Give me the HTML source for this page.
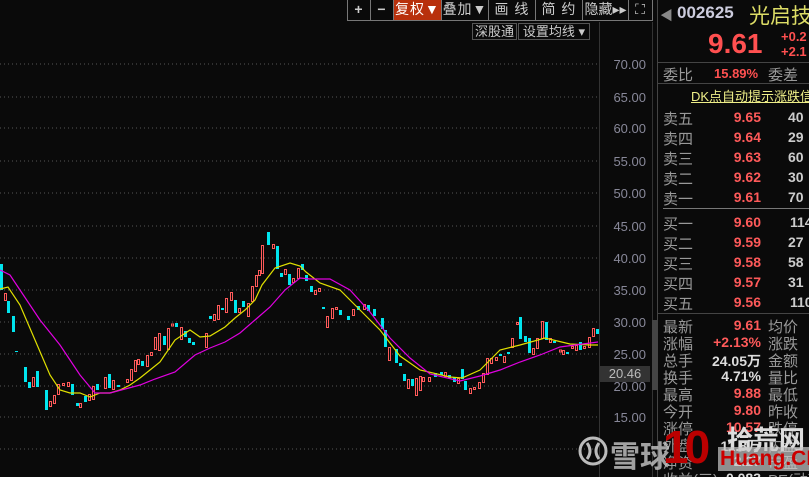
<!DOCTYPE html>
<html style="height:477px;overflow:hidden"><head><meta charset="utf-8"><style>
*{margin:0;padding:0;box-sizing:border-box}
body{width:809px;height:477px;background:#0a0a0a;overflow:hidden;position:relative;font-family:"Liberation Sans","Noto Sans CJK SC",sans-serif;color:#aaa}
.a{position:absolute;white-space:nowrap}
.tb{position:absolute;top:0;height:21px;border:1px solid #777;border-top:none;color:#ccc;font-size:14px;line-height:19px;text-align:center;letter-spacing:1px}
.ax{position:absolute;left:600px;width:46px;text-align:right;font-size:13px;color:#889}
.lb{position:absolute;left:663px;font-size:15px;color:#999}
.pr{position:absolute;right:48px;font-size:14px;color:#ff5a5a;font-weight:bold;text-align:right}
.r2{position:absolute;left:768px;font-size:15px;color:#999}
.q{position:absolute;left:788px;font-size:14px;color:#ccc;font-weight:bold}
.hl{position:absolute;left:657px;width:152px;height:1px;background:#444}
.r{fill:#0a0a0a;stroke:#ff5a5a;stroke-width:1}
.c{fill:#00e5ee}
#wrap{position:absolute;left:0;top:0;width:809px;height:477px;overflow:hidden}
</style></head><body><div id="wrap">
<svg class="a" style="left:0;top:0" width="809" height="477">
<g stroke="#555" stroke-dasharray="1,3">
<line x1="0" y1="64" x2="598" y2="64"/><line x1="0" y1="97" x2="598" y2="97"/><line x1="0" y1="128" x2="598" y2="128"/><line x1="0" y1="161" x2="598" y2="161"/><line x1="0" y1="193" x2="598" y2="193"/><line x1="0" y1="226" x2="598" y2="226"/><line x1="0" y1="258" x2="598" y2="258"/><line x1="0" y1="290" x2="598" y2="290"/><line x1="0" y1="322" x2="598" y2="322"/><line x1="0" y1="354" x2="598" y2="354"/><line x1="0" y1="386" x2="598" y2="386"/><line x1="0" y1="417" x2="598" y2="417"/><line x1="0" y1="449" x2="598" y2="449"/>
</g>
<line x1="599.5" y1="22" x2="599.5" y2="477" stroke="#333"/>
<line x1="652.5" y1="22" x2="652.5" y2="477" stroke="#333"/>
<line x1="657.5" y1="0" x2="657.5" y2="477" stroke="#444"/>
<rect x="652" y="320" width="5" height="70" fill="#444"/>
<g>
<rect class="c" x="0" y="264" width="3" height="26"/>
<rect class="r" x="4.5" y="293.5" width="2" height="7"/>
<rect class="c" x="7" y="301" width="3" height="12"/>
<rect class="c" x="12" y="316" width="3" height="16"/>
<rect class="c" x="15" y="351" width="3" height="1"/>
<rect class="c" x="24" y="367" width="3" height="15"/>
<rect class="c" x="28" y="382" width="3" height="6"/>
<rect class="r" x="32.5" y="377.5" width="2" height="9"/>
<rect class="c" x="36" y="371" width="3" height="16"/>
<rect class="c" x="45" y="390" width="3" height="20"/>
<rect class="r" x="49.5" y="401.5" width="2" height="5"/>
<rect class="r" x="53.5" y="395.5" width="2" height="8"/>
<rect class="r" x="57.5" y="384.5" width="2" height="10"/>
<rect class="r" x="62.5" y="383.5" width="2" height="2"/>
<rect class="r" x="67.5" y="382.5" width="2" height="4"/>
<rect class="c" x="71" y="384" width="3" height="11"/>
<rect class="c" x="76" y="403" width="3" height="3"/>
<rect class="r" x="79.5" y="403.5" width="2" height="4"/>
<rect class="c" x="84" y="396" width="3" height="6"/>
<rect class="r" x="88.5" y="394.5" width="2" height="6"/>
<rect class="r" x="92.5" y="386.5" width="2" height="13"/>
<rect class="c" x="96" y="384" width="3" height="6"/>
<rect class="r" x="104.5" y="377.5" width="2" height="11"/>
<rect class="c" x="108" y="374" width="3" height="14"/>
<rect class="r" x="112.5" y="380.5" width="2" height="9"/>
<rect class="c" x="117" y="385" width="3" height="2"/>
<rect class="r" x="126.5" y="379.5" width="2" height="3"/>
<rect class="r" x="130.5" y="369.5" width="2" height="11"/>
<rect class="r" x="134.5" y="360.5" width="2" height="11"/>
<rect class="r" x="137.5" y="359.5" width="2" height="5"/>
<rect class="c" x="141" y="361" width="3" height="5"/>
<rect class="r" x="146.5" y="355.5" width="2" height="11"/>
<rect class="r" x="150.5" y="352.5" width="2" height="3"/>
<rect class="r" x="154.5" y="337.5" width="2" height="12"/>
<rect class="r" x="158.5" y="333.5" width="2" height="17"/>
<rect class="c" x="163" y="336" width="3" height="9"/>
<rect class="r" x="167.5" y="328.5" width="2" height="21"/>
<rect class="r" x="171.5" y="324" width="2" height="2"/>
<rect class="c" x="175" y="323" width="3" height="4"/>
<rect class="r" x="180.5" y="327.5" width="2" height="12"/>
<rect class="c" x="184" y="331" width="3" height="6"/>
<rect class="c" x="188" y="338" width="3" height="5"/>
<rect class="c" x="192" y="342" width="3" height="3"/>
<rect class="r" x="205.5" y="333.5" width="2" height="14"/>
<rect class="c" x="209" y="316" width="3" height="3"/>
<rect class="r" x="213.5" y="314.5" width="2" height="6"/>
<rect class="r" x="217.5" y="305.5" width="2" height="14"/>
<rect class="c" x="221" y="308" width="3" height="2"/>
<rect class="r" x="225.5" y="298.5" width="2" height="14"/>
<rect class="r" x="230.5" y="292.5" width="2" height="8"/>
<rect class="c" x="234" y="300" width="3" height="13"/>
<rect class="r" x="238.5" y="308.5" width="2" height="4"/>
<rect class="c" x="242" y="301" width="3" height="6"/>
<rect class="r" x="247.5" y="303.5" width="2" height="13"/>
<rect class="r" x="251.5" y="286.5" width="2" height="15"/>
<rect class="r" x="255.5" y="275.5" width="2" height="11"/>
<rect class="r" x="258.5" y="270.5" width="2" height="5"/>
<rect class="r" x="261.5" y="245.5" width="2" height="28"/>
<rect class="c" x="267" y="232" width="3" height="13"/>
<rect class="r" x="272.5" y="244.5" width="2" height="4"/>
<rect class="c" x="276" y="246" width="3" height="23"/>
<rect class="c" x="280" y="273" width="3" height="4"/>
<rect class="r" x="284.5" y="269.5" width="2" height="5"/>
<rect class="c" x="288" y="274" width="3" height="11"/>
<rect class="r" x="292.5" y="278.5" width="2" height="4"/>
<rect class="r" x="297.5" y="268.5" width="2" height="10"/>
<rect class="c" x="301" y="264" width="3" height="6"/>
<rect class="c" x="305" y="275" width="3" height="6"/>
<rect class="c" x="310" y="286" width="3" height="6"/>
<rect class="r" x="314.5" y="290.5" width="2" height="4"/>
<rect class="r" x="318.5" y="288.5" width="2" height="3"/>
<rect class="c" x="322" y="307" width="3" height="2"/>
<rect class="r" x="326.5" y="316.5" width="2" height="11"/>
<rect class="r" x="331.5" y="308.5" width="2" height="10"/>
<rect class="r" x="335.5" y="307.5" width="2" height="2"/>
<rect class="c" x="339" y="310" width="3" height="5"/>
<rect class="c" x="347" y="316" width="3" height="4"/>
<rect class="r" x="352.5" y="309.5" width="2" height="6"/>
<rect class="c" x="357" y="306" width="3" height="4"/>
<rect class="r" x="363.5" y="304.5" width="2" height="5"/>
<rect class="c" x="367" y="305" width="3" height="6"/>
<rect class="c" x="373" y="309" width="3" height="7"/>
<rect class="c" x="381" y="318" width="3" height="11"/>
<rect class="c" x="384" y="330" width="3" height="17"/>
<rect class="r" x="388.5" y="347.5" width="2" height="13"/>
<rect class="c" x="395" y="349" width="3" height="14"/>
<rect class="c" x="399" y="363" width="3" height="3"/>
<rect class="c" x="403" y="374" width="3" height="7"/>
<rect class="r" x="407.5" y="379.5" width="2" height="9"/>
<rect class="c" x="411" y="379" width="3" height="7"/>
<rect class="r" x="415.5" y="378.5" width="2" height="17"/>
<rect class="r" x="419.5" y="376.5" width="2" height="14"/>
<rect class="r" x="422.5" y="377.5" width="2" height="4"/>
<rect class="r" x="428.5" y="377.5" width="2" height="4"/>
<rect class="c" x="434" y="373" width="3" height="4"/>
<rect class="c" x="440" y="372" width="3" height="3"/>
<rect class="r" x="444.5" y="372.5" width="2" height="4"/>
<rect class="c" x="448" y="375" width="3" height="3"/>
<rect class="c" x="453" y="377" width="3" height="5"/>
<rect class="r" x="457.5" y="378.5" width="2" height="5"/>
<rect class="c" x="461" y="369" width="3" height="10"/>
<rect class="c" x="464" y="381" width="3" height="9"/>
<rect class="r" x="469.5" y="388.5" width="2" height="5"/>
<rect class="r" x="473.5" y="387.5" width="2" height="2"/>
<rect class="r" x="478.5" y="382.5" width="2" height="6"/>
<rect class="r" x="482.5" y="373.5" width="2" height="9"/>
<rect class="r" x="486.5" y="358.5" width="2" height="16"/>
<rect class="r" x="490.5" y="358.5" width="2" height="5"/>
<rect class="r" x="495.5" y="357.5" width="2" height="3"/>
<rect class="c" x="499" y="354" width="3" height="2"/>
<rect class="r" x="503.5" y="356.5" width="2" height="6"/>
<rect class="c" x="507" y="352" width="3" height="2"/>
<rect class="r" x="511.5" y="338.5" width="2" height="9"/>
<rect class="r" x="516.5" y="322.5" width="2" height="2"/>
<rect class="c" x="519" y="317" width="3" height="22"/>
<rect class="c" x="524" y="336" width="3" height="6"/>
<rect class="c" x="528" y="338" width="3" height="15"/>
<rect class="r" x="532.5" y="348.5" width="2" height="6"/>
<rect class="r" x="536.5" y="338.5" width="2" height="10"/>
<rect class="r" x="541.5" y="321.5" width="2" height="17"/>
<rect class="c" x="545" y="322" width="3" height="18"/>
<rect class="r" x="549.5" y="338.5" width="2" height="4"/>
<rect class="c" x="553" y="341" width="3" height="2"/>
<rect class="r" x="559.5" y="350" width="2" height="2"/>
<rect class="r" x="562.5" y="350.5" width="2" height="4"/>
<rect class="c" x="566" y="352" width="3" height="2"/>
<rect class="r" x="571.5" y="346.5" width="2" height="2"/>
<rect class="r" x="575.5" y="345.5" width="2" height="5"/>
<rect class="c" x="579" y="342" width="3" height="8"/>
<rect class="r" x="583.5" y="346.5" width="2" height="2"/>
<rect class="r" x="588.5" y="337.5" width="2" height="10"/>
<rect class="r" x="592.5" y="328.5" width="2" height="8"/>
<rect class="c" x="596" y="329" width="3" height="5"/>
</g>
<polyline fill="none" stroke="#e0e000" stroke-width="1.2" points="0,289 8,287 20,305 35,340 50,375 60,390 70,393 80,393 90,397 100,393 110,393 120,390 130,385 140,378 150,370 160,362 175,340 190,330 200,337 210,336 225,327 235,318 245,310 255,300 262,285 275,268 290,263 300,266 306,272 320,283 340,290 360,310 380,330 400,356 420,370 450,377 462,378 480,370 500,350 520,345 545,338 570,344 590,345 598,345"/>
<polyline fill="none" stroke="#e000e0" stroke-width="1.2" points="0,270 10,275 20,290 40,320 60,345 80,375 95,393 110,393 125,389 140,385 155,379 175,372 195,355 210,348 225,342 240,333 255,320 270,307 285,290 300,278 310,279 330,279 350,290 370,312 390,338 410,358 430,374 460,381 480,376 500,370 520,362 540,355 560,347 575,345 598,342"/>
</svg>

<div class="tb" style="left:347px;width:24px;font-weight:bold">+</div>
<div class="tb" style="left:370px;width:24px;font-weight:bold">−</div>
<div class="tb" style="left:393px;width:49px;background:#b8300c;color:#fff">复权▼</div>
<div class="tb" style="left:441px;width:48px">叠加▼</div>
<div class="tb" style="left:488px;width:48px">画 线</div>
<div class="tb" style="left:535px;width:48px">简 约</div>
<div class="tb" style="left:582px;width:47px;letter-spacing:0">隐藏▸▸</div>
<div class="tb" style="left:628px;width:25px">⛶</div>
<div class="a" style="left:472px;top:23px;width:45px;height:17px;border:1px solid #555;font-size:13px;line-height:15px;text-align:center;color:#ccc">深股通</div>
<div class="a" style="left:518px;top:23px;width:72px;height:17px;border:1px solid #555;font-size:13px;line-height:15px;text-align:center;color:#ccc">设置均线 ▾</div>

<div class="ax" style="top:57px">70.00</div>
<div class="ax" style="top:90px">65.00</div>
<div class="ax" style="top:121px">60.00</div>
<div class="ax" style="top:154px">55.00</div>
<div class="ax" style="top:186px">50.00</div>
<div class="ax" style="top:219px">45.00</div>
<div class="ax" style="top:251px">40.00</div>
<div class="ax" style="top:283px">35.00</div>
<div class="ax" style="top:315px">30.00</div>
<div class="ax" style="top:347px">25.00</div>
<div class="ax" style="top:379px">20.00</div>
<div class="ax" style="top:410px">15.00</div>
<div class="a" style="left:600px;top:366px;width:50px;height:16px;background:#333;color:#bbb;font-size:13px;text-align:center;line-height:16px">20.46</div>

<div class="a" style="left:660px;top:5px;font-size:13px;color:#888">◀</div>
<div class="a" style="left:677px;top:3px;font-size:17px;color:#ccd;font-weight:bold">002625</div>
<div class="a" style="left:749px;top:0px;font-size:21px;color:#dd6">光启技</div>
<div class="a" style="left:708px;top:28px;font-size:28px;color:#ff5050;font-weight:bold">9.61</div>
<div class="a" style="left:781px;top:29px;font-size:13px;color:#ff5050;font-weight:bold">+0.2</div>
<div class="a" style="left:781px;top:44px;font-size:13px;color:#ff5050;font-weight:bold">+2.1</div>
<div class="hl" style="top:62px"></div>
<div class="lb" style="top:64px">委比</div>
<div class="a" style="left:714px;top:66px;font-size:13px;color:#ff5050;font-weight:bold">15.89%</div>
<div class="a" style="left:768px;top:64px;font-size:15px;color:#999">委差</div>
<div class="hl" style="top:83px"></div>
<div class="a" style="left:691px;top:86px;font-size:13px;color:#ee8;text-decoration:underline">DK点自动提示涨跌信</div>

<div class="lb" style="top:108px">卖五</div><div class="pr" style="top:109px">9.65</div><div class="q" style="top:109px">40</div>
<div class="lb" style="top:128px">卖四</div><div class="pr" style="top:129px">9.64</div><div class="q" style="top:129px">29</div>
<div class="lb" style="top:148px">卖三</div><div class="pr" style="top:149px">9.63</div><div class="q" style="top:149px">60</div>
<div class="lb" style="top:168px">卖二</div><div class="pr" style="top:169px">9.62</div><div class="q" style="top:169px">30</div>
<div class="lb" style="top:188px">卖一</div><div class="pr" style="top:189px">9.61</div><div class="q" style="top:189px">70</div>
<div class="hl" style="top:208px;left:663px;background:#777"></div>
<div class="lb" style="top:213px">买一</div><div class="pr" style="top:214px">9.60</div><div class="q" style="top:214px;left:790px">114</div>
<div class="lb" style="top:233px">买二</div><div class="pr" style="top:234px">9.59</div><div class="q" style="top:234px">27</div>
<div class="lb" style="top:253px">买三</div><div class="pr" style="top:254px">9.58</div><div class="q" style="top:254px">58</div>
<div class="lb" style="top:273px">买四</div><div class="pr" style="top:274px">9.57</div><div class="q" style="top:274px">31</div>
<div class="lb" style="top:293px">买五</div><div class="pr" style="top:294px">9.56</div><div class="q" style="top:294px;left:790px">110</div>
<div class="hl" style="top:313px"></div>

<div class="lb" style="top:316px">最新</div><div class="pr" style="top:317px">9.61</div><div class="r2" style="top:316px">均价</div>
<div class="lb" style="top:333px">涨幅</div><div class="pr" style="top:334px">+2.13%</div><div class="r2" style="top:333px">涨跌</div>
<div class="lb" style="top:350px">总手</div><div class="pr" style="top:351px;color:#ddd">24.05万</div><div class="r2" style="top:350px">金额</div>
<div class="lb" style="top:367px">换手</div><div class="pr" style="top:368px;color:#ddd">4.71%</div><div class="r2" style="top:367px">量比</div>
<div class="lb" style="top:384px">最高</div><div class="pr" style="top:385px">9.88</div><div class="r2" style="top:384px">最低</div>
<div class="lb" style="top:401px">今开</div><div class="pr" style="top:402px">9.80</div><div class="r2" style="top:401px">昨收</div>
<div class="lb" style="top:418px">涨停</div><div class="pr" style="top:419px">10.57</div><div class="r2" style="top:418px">跌停</div>
<div class="lb" style="top:435px">外盘</div><div class="pr" style="top:436px;color:#ddd">11.8万</div><div class="r2" style="top:435px">内盘</div>
<div class="lb" style="top:452px">净资</div><div class="pr" style="top:453px;color:#ddd">2.27</div><div class="r2" style="top:452px">市盈</div>
<div class="lb" style="top:469px">收益(三)</div><div class="pr" style="top:470px;color:#ddd">0.083</div><div class="r2" style="top:469px">PE(动)</div>

<svg class="a" style="left:578px;top:434px" width="30" height="34"><circle cx="15" cy="17" r="13" fill="none" stroke="#bbb" stroke-width="3"/><path d="M9 9 Q15 17 9 25 M21 9 Q15 17 21 25" fill="none" stroke="#bbb" stroke-width="3"/></svg>
<div class="a" style="left:610px;top:432px;font-size:30px;color:rgba(200,200,200,.8);font-weight:bold">雪球</div>
<div class="a" style="left:663px;top:420px;font-size:46px;color:#b00;font-weight:bold;letter-spacing:-4px">10</div>
<div class="a" style="left:727px;top:420px;font-size:26px;color:#ddd;font-weight:bold">拾荒网</div>
<div class="a" style="left:718px;top:447px;font-size:21px;color:#c00;font-weight:bold;background:rgba(200,200,200,.7);padding:0 2px">Huang.CN</div>
</div></body></html>
